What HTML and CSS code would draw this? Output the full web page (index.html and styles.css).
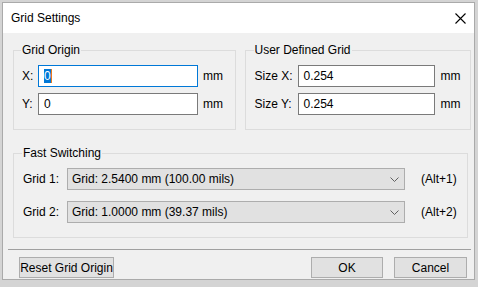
FILE: index.html
```html
<!DOCTYPE html>
<html lang="en">
<head>
  <meta charset="UTF-8">
  <title>Grid Settings</title>
  <link rel="stylesheet" href="styles.css">
</head>
<body>
  <div class="window">
    <div class="titlebar">
      <span class="title">Grid Settings</span>
      <svg class="close" width="11" height="11" viewBox="0 0 11 11">
        <path d="M0.5 0.5L10.5 10.5M10.5 0.5L0.5 10.5" stroke="#000" stroke-width="1.1" fill="none"/>
      </svg>
    </div>
    <div class="content">
      <div class="top-row">
        <fieldset class="group origin">
          <legend>Grid Origin</legend>
          <div class="field-row">
            <span class="lbl">X:</span>
            <div class="textbox focused"><span class="sel">0</span></div>
            <span class="unit">mm</span>
          </div>
          <div class="field-row">
            <span class="lbl">Y:</span>
            <div class="textbox">0</div>
            <span class="unit">mm</span>
          </div>
        </fieldset>
        <fieldset class="group user-grid">
          <legend>User Defined Grid</legend>
          <div class="field-row">
            <span class="lbl">Size X:</span>
            <div class="textbox">0.254</div>
            <span class="unit">mm</span>
          </div>
          <div class="field-row">
            <span class="lbl">Size Y:</span>
            <div class="textbox">0.254</div>
            <span class="unit">mm</span>
          </div>
        </fieldset>
      </div>

      <fieldset class="group fast">
        <legend>Fast Switching</legend>
        <div class="field-row">
          <span class="lbl">Grid 1:</span>
          <div class="combo">
            <span>Grid: 2.5400 mm (100.00 mils)</span>
            <svg width="9" height="5" viewBox="0 0 9 5"><path d="M0.5 0.5L4.5 4.5L8.5 0.5" stroke="#606060" fill="none"/></svg>
          </div>
          <span class="hotkey">(Alt+1)</span>
        </div>
        <div class="field-row">
          <span class="lbl">Grid 2:</span>
          <div class="combo">
            <span>Grid: 1.0000 mm (39.37 mils)</span>
            <svg width="9" height="5" viewBox="0 0 9 5"><path d="M0.5 0.5L4.5 4.5L8.5 0.5" stroke="#606060" fill="none"/></svg>
          </div>
          <span class="hotkey">(Alt+2)</span>
        </div>
      </fieldset>

      <div class="separator"></div>

      <div class="buttons">
        <button class="btn reset">Reset Grid Origin</button>
        <div class="spacer"></div>
        <button class="btn ok">OK</button>
        <button class="btn cancel">Cancel</button>
      </div>
    </div>
  </div>
</body>
</html>
```

FILE: styles.css
```css
body {
  margin: 0;
  padding: 2px 0 0 2px;
  background: #d4d4d4;
  font-family: "Liberation Sans", Arial, sans-serif;
  font-size: 12px;
  color: #000;
}
.window {
  width: 471px;
  height: 276px;
  border: 1px solid #aaaaaa;
  background: #f0f0f0;
  display: flex;
  flex-direction: column;
}
.titlebar {
  height: 30px;
  flex: none;
  background: #fff;
  display: flex;
  align-items: center;
  justify-content: space-between;
  padding: 0 8px 0 8px;
}
.title {
  font-size: 12px;
}
.close {
  display: block;
}
.content {
  padding: 10px 3px 0 10px;
}
.top-row {
  display: flex;
  gap: 9px;
}
.group {
  box-sizing: border-box;
  margin: 0;
  min-width: 0;
  border: 1px solid #dcdcdc;
  padding: 8px 8px 14px 8px;
}
.group legend {
  padding: 0 1px;
  margin-left: -1px;
  line-height: 14px;
}
.origin {
  width: 223px;
}
.user-grid {
  width: 227px;
  padding-left: 9px;
}
.field-row {
  display: flex;
  align-items: center;
  height: 22px;
}
.field-row + .field-row {
  margin-top: 6px;
}
.lbl {
  flex: none;
}
.origin .lbl {
  width: 16px;
}
.user-grid .lbl {
  width: 43px;
}
.textbox {
  box-sizing: border-box;
  height: 22px;
  line-height: 20px;
  padding-left: 5px;
  background: #fff;
  border: 1px solid #7a7a7a;
}
.textbox.focused {
  border-color: #0078d7;
}
.sel {
  background: #0078d7;
  color: #fff;
  border-right: 1px solid #e87a1c;
}
.origin .textbox {
  width: 160px;
}
.user-grid .textbox {
  width: 137px;
}
.unit {
  margin-left: 5px;
}
.user-grid .unit {
  margin-left: 6px;
}
.fast {
  width: 455px;
  margin-top: 16px;
  padding-left: 9px;
}
.fast .field-row + .field-row {
  margin-top: 11px;
}
.fast .lbl {
  width: 44px;
}
.combo {
  box-sizing: border-box;
  width: 338px;
  height: 22px;
  display: flex;
  align-items: center;
  justify-content: space-between;
  padding: 0 5px 0 4px;
  background: #e1e1e1;
  border: 1px solid #adadad;
}
.hotkey {
  margin-left: 16px;
}
.separator {
  margin: 11px 0 0 -5px;
  border-top: 1px solid #a0a0a0;
}
.buttons {
  display: flex;
  gap: 11px;
  margin: 7px 4px 0 6px;
}
.spacer {
  flex: 1;
}
.btn {
  height: 21px;
  padding: 0;
  font-family: inherit;
  font-size: 12px;
  color: #000;
  background: #e1e1e1;
  border: 1px solid #adadad;
}
.reset {
  width: 95px;
}
.ok {
  width: 72px;
}
.cancel {
  width: 73px;
}
```
